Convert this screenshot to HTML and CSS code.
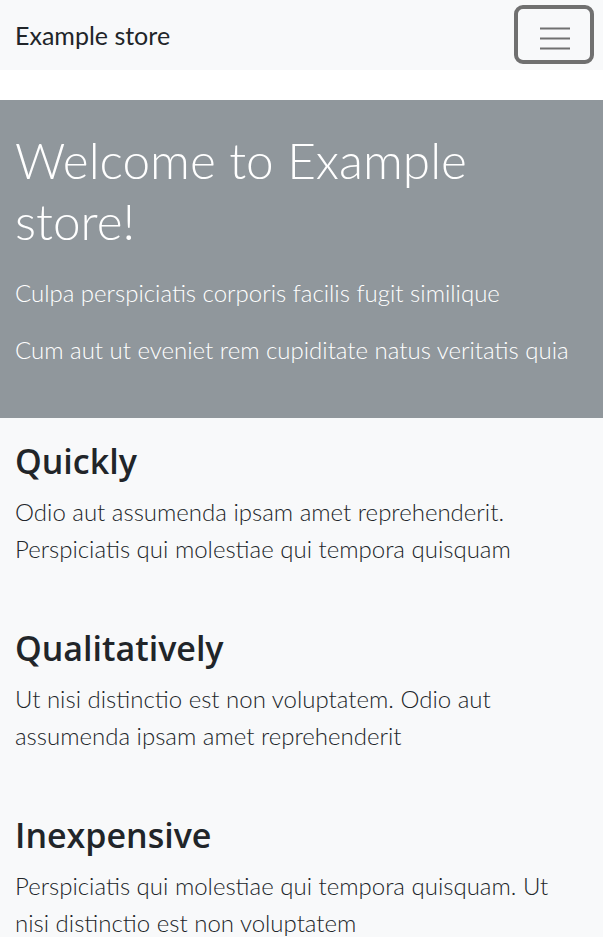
FILE: index.html
```html
<!DOCTYPE html>
<html lang="en">
<head>
<meta charset="utf-8">
<title>Example store</title>
<link rel="stylesheet" href="styles.css">
</head>
<body>
<nav class="navbar">
  <a class="brand" href="#">Example store</a>
  <button class="toggler" type="button" aria-label="Toggle navigation">
    <svg class="toggler-icon" width="30" height="30" viewBox="0 0 30 30" aria-hidden="true">
      <path d="M0 7.5h30M0 17.5h30M0 27.5h30" stroke="#707070" stroke-width="2" fill="none"/>
    </svg>
  </button>
</nav>

<header class="hero">
  <h1 class="hero-title">Welcome to Example store!</h1>
  <p class="hero-text">Culpa perspiciatis corporis facilis fugit similique</p>
  <p class="hero-text">Cum aut ut eveniet rem cupiditate natus veritatis quia</p>
</header>

<main class="features">
  <section class="feature">
    <h2 class="feature-title">Quickly</h2>
    <p class="feature-text">Odio aut assumenda ipsam amet reprehenderit. Perspiciatis qui molestiae qui tempora quisquam</p>
  </section>
  <section class="feature">
    <h2 class="feature-title">Qualitatively</h2>
    <p class="feature-text">Ut nisi distinctio est non voluptatem. Odio aut assumenda ipsam amet reprehenderit</p>
  </section>
  <section class="feature">
    <h2 class="feature-title">Inexpensive</h2>
    <p class="feature-text">Perspiciatis qui molestiae qui tempora quisquam. Ut nisi distinctio est non voluptatem</p>
  </section>
</main>
</body>
</html>
```
FILE: styles.css
```css
* { box-sizing: border-box; }

html, body { margin: 0; padding: 0; }

body {
  background: #fff;
  color: #212529;
  font-family: Lato, "Liberation Sans", sans-serif;
  overflow: hidden;
}

.navbar {
  height: 70px;
  background: #f8f9fa;
  display: flex;
  align-items: center;
  justify-content: space-between;
  padding: 0 9px 0 15px;
}

.brand {
  font-size: 25px;
  font-weight: 400;
  color: #212529;
  text-decoration: none;
}

.toggler {
  width: 80px;
  height: 59px;
  margin-top: -1px;
  border: 4px solid #707070;
  border-radius: 9px;
  background: #f8f9fa;
  display: flex;
  align-items: center;
  justify-content: center;
  padding: 0;
}

.toggler-icon { display: block; margin-top: 2px; margin-left: 1px; }

.hero {
  margin-top: 30px;
  background: #90979c;
  color: #fff;
  padding: 30px 15px 30px;
}

.hero-title {
  margin: 0 0 22px;
  font-size: 49.5px;
  font-weight: 300;
  line-height: 61px;
}

.hero-text {
  margin: 0 0 20px;
  font-size: 24px;
  font-weight: 300;
  line-height: 37px;
}

.features {
  background: #f8f9fa;
  padding: 23px 15px 40px;
  display: flex;
  flex-direction: column;
  gap: 61px;
  min-height: 600px;
}

.feature-title {
  margin: 0 0 11px;
  font-family: "Open Sans", Lato, sans-serif;
  font-size: 34px;
  font-weight: 600;
  line-height: 41px;
  color: #212529;
}

.feature-text {
  margin: 0;
  font-size: 24px;
  font-weight: 300;
  line-height: 37px;
  color: #212529;
}
```
